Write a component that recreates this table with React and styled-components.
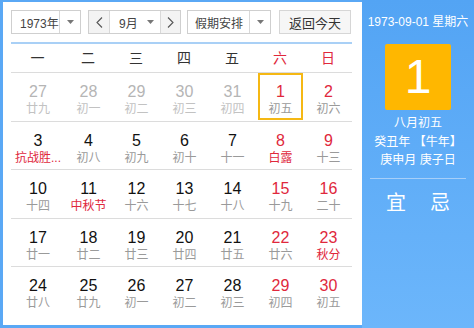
import React from "react";
import styled, { createGlobalStyle } from "styled-components";

const Global = createGlobalStyle`
  html, body { margin: 0; padding: 0; }
  body { font-family: "Liberation Sans", "Noto Sans CJK SC", sans-serif; }
`;

const Frame = styled.div`
  width: 474px;
  height: 328px;
  display: flex;
  background: #5aa8f5;
  box-sizing: border-box;
  padding: 2px 0 3px 3px;
  overflow: hidden;
`;

const Main = styled.div`
  width: 359px;
  flex: none;
  background: #fff;
  box-sizing: border-box;
  padding: 8px 10px 0 8px;
  display: flex;
  flex-direction: column;
`;

const Toolbar = styled.div`
  display: flex;
  height: 24px;
  align-items: stretch;
  padding-bottom: 8px;
  border-bottom: 2px solid #a9d0f6;
`;

const Box = styled.div`
  display: flex;
  align-items: stretch;
  border: 1px solid #cfcfcf;
  box-sizing: border-box;
  margin-right: ${(p) => p.$mr || 0}px;
  width: ${(p) => p.$w}px;
  flex: none;
  background: #fff;
  font-size: 12px;
  color: #333;
`;

const Seg = styled.div`
  display: flex;
  align-items: center;
  white-space: nowrap;
  justify-content: ${(p) => (p.$center ? "center" : "flex-start")};
  padding-left: ${(p) => p.$pl || 0}px;
  width: ${(p) => (p.$w ? p.$w + "px" : "auto")};
  flex: ${(p) => (p.$w ? "none" : "1")};
  min-width: 0;
  background: ${(p) => (p.$gray ? "#f3f3f3" : "#fff")};
  border-left: ${(p) => (p.$bl ? "1px solid #d8d8d8" : "none")};
  border-right: ${(p) => (p.$br ? "1px solid #d8d8d8" : "none")};
  color: #444;
`;

const Caret = () => (
  <svg width="7" height="4" viewBox="0 0 7 4">
    <path d="M0 0 L7 0 L3.5 4 Z" fill="#777" />
  </svg>
);

const Chevron = ({ dir }) => (
  <svg width="7" height="11" viewBox="0 0 7 11">
    <path
      d={dir === "left" ? "M6 0.5 L1 5.5 L6 10.5" : "M1 0.5 L6 5.5 L1 10.5"}
      fill="none"
      stroke="#555"
      strokeWidth="1.1"
    />
  </svg>
);

const Button = styled.div`
  width: 72px;
  flex: none;
  box-sizing: border-box;
  border: 1px solid #d6d6d6;
  background: #f6f6f6;
  display: flex;
  align-items: center;
  justify-content: center;
  font-size: 13px;
  color: #333;
  white-space: nowrap;
`;

const Grid = styled.div`
  display: grid;
  grid-template-columns: repeat(7, 1fr);
`;

const Head = styled.div`
  height: 28px;
  line-height: 28px;
  text-align: center;
  font-size: 14px;
  color: ${(p) => (p.$red ? "#e0283c" : "#333")};
  border-bottom: 1px solid #dcdcdc;
`;

const Cell = styled.div`
  height: 48.5px;
  box-sizing: border-box;
  border-bottom: ${(p) => (p.$last ? "none" : "1px solid #dcdcdc")};
  display: flex;
  justify-content: center;
`;

const Inner = styled.div`
  flex: 1;
  margin: 0 1px 1px 2px;
  box-sizing: border-box;
  border: 2px solid ${(p) => (p.$sel ? "#f5b814" : "transparent")};
  display: flex;
  flex-direction: column;
  align-items: center;
  padding-top: 8px;
`;

const Num = styled.div`
  font-size: 16px;
  line-height: 18px;
  color: ${(p) => (p.$tone === "red" ? "#e0283c" : p.$tone === "dim" ? "#b5b5b5" : "#111")};
`;

const Lunar = styled.div`
  font-size: 12px;
  line-height: 15px;
  margin-top: 1px;
  white-space: nowrap;
  color: ${(p) => (p.$tone === "red" ? "#e0283c" : p.$tone === "dim" ? "#c2c2c2" : "#9a9a9a")};
`;

const Side = styled.div`
  flex: 1;
  min-width: 0;
  background: linear-gradient(#53a4f4, #6cb6fb);
  color: #fff;
  display: flex;
  flex-direction: column;
  align-items: center;
  margin: -2px 0 -3px 0;
  padding-top: 13px;
`;

const DateLine = styled.div`
  font-size: 12px;
  line-height: 18px;
  margin-bottom: 13px;
  white-space: nowrap;
`;

const DayBox = styled.div`
  width: 66px;
  height: 66px;
  border-radius: 2px;
  background: #ffb700;
  display: flex;
  align-items: center;
  justify-content: center;
  font-size: 48px;
  line-height: 1;
  font-family: "Liberation Sans", sans-serif;
  margin-bottom: 4px;
`;

const Info = styled.div`
  font-size: 12px;
  line-height: 18.5px;
  text-align: center;
  white-space: nowrap;
`;

const Divider = styled.div`
  width: 96px;
  height: 1px;
  margin-top: 8px;
  background: #a6cff9;
`;

const YiJi = styled.div`
  display: flex;
  width: 100%;
  justify-content: space-around;
  padding: 0 12px;
  box-sizing: border-box;
  font-size: 20px;
  line-height: 26px;
  margin-top: 11px;
`;

const weeks = ["一", "二", "三", "四", "五", "六", "日"];

const rows = [
  [["27", "廿九", "dim", "dim"], ["28", "初一", "dim", "dim"], ["29", "初二", "dim", "dim"], ["30", "初三", "dim", "dim"], ["31", "初四", "dim", "dim"], ["1", "初五", "red", "", true], ["2", "初六", "red", ""]],
  [["3", "抗战胜...", "", "red"], ["4", "初八"], ["5", "初九"], ["6", "初十"], ["7", "十一"], ["8", "白露", "red", "red"], ["9", "十三", "red", ""]],
  [["10", "十四"], ["11", "中秋节", "", "red"], ["12", "十六"], ["13", "十七"], ["14", "十八"], ["15", "十九", "red", ""], ["16", "二十", "red", ""]],
  [["17", "廿一"], ["18", "廿二"], ["19", "廿三"], ["20", "廿四"], ["21", "廿五"], ["22", "廿六", "red", ""], ["23", "秋分", "red", "red"]],
  [["24", "廿八"], ["25", "廿九"], ["26", "初一"], ["27", "初二"], ["28", "初三"], ["29", "初四", "red", ""], ["30", "初五", "red", ""]],
];

export default function App() {
  return (
    <>
      <Global />
      <Frame>
        <Main>
          <Toolbar>
            <Box $w={70} $mr={7}>
              <Seg $pl={8} $br>1973年</Seg>
              <Seg $w={20} $center><Caret /></Seg>
            </Box>
            <Box $w={93} $mr={6}>
              <Seg $w={20} $gray $center $br><Chevron dir="left" /></Seg>
              <Seg $pl={9}>9月</Seg>
              <Seg $w={20} $center><Caret /></Seg>
              <Seg $w={19} $gray $center $bl><Chevron dir="right" /></Seg>
            </Box>
            <Box $w={84} $mr={8}>
              <Seg $pl={7} $br>假期安排</Seg>
              <Seg $w={20} $center><Caret /></Seg>
            </Box>
            <Button>返回今天</Button>
          </Toolbar>
          <Grid>
            {weeks.map((w, i) => (
              <Head key={w} $red={i >= 5}>{w}</Head>
            ))}
            {rows.map((r, ri) =>
              r.map(([n, l, nt, lt, sel], ci) => (
                <Cell key={ri + "-" + ci} $last={ri === rows.length - 1}>
                  <Inner $sel={sel}>
                    <Num $tone={nt}>{n}</Num>
                    <Lunar $tone={lt}>{l}</Lunar>
                  </Inner>
                </Cell>
              ))
            )}
          </Grid>
        </Main>
        <Side>
          <DateLine>1973-09-01 星期六</DateLine>
          <DayBox>1</DayBox>
          <Info>八月初五</Info>
          <Info>癸丑年 【牛年】</Info>
          <Info>庚申月 庚子日</Info>
          <Divider />
          <YiJi>
            <span>宜</span>
            <span>忌</span>
          </YiJi>
        </Side>
      </Frame>
    </>
  );
}
